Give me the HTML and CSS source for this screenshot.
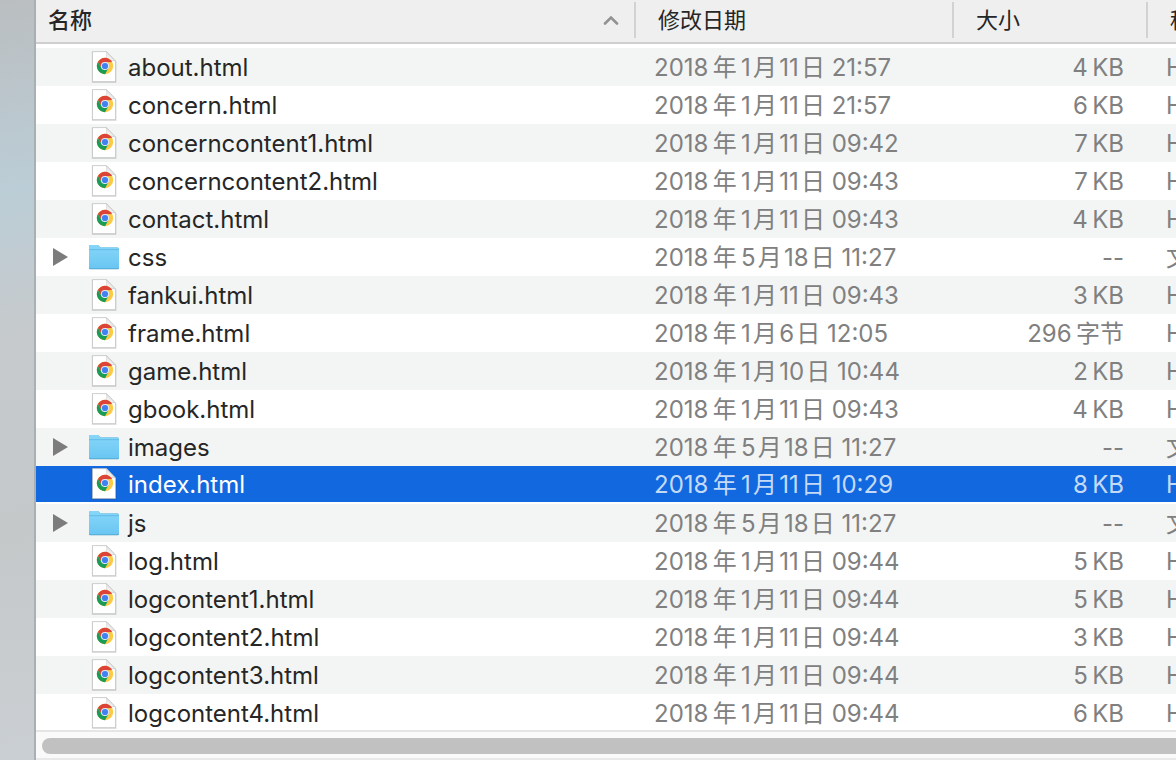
FILE: index.html
```html
<!DOCTYPE html>
<html lang="zh-CN">

<head>
    <meta charset="UTF-8">
    <meta name="viewport" content="width=device-width, initial-scale=1.0">
    <title>文件列表</title>
    <link rel="stylesheet" href="styles.css">
</head>

<body>
    <!-- shared icons -->
    <svg class="sprite" aria-hidden="true">
        <defs>
            <linearGradient id="folderFill" x1="0" y1="0" x2="0" y2="1">
                <stop offset="0" stop-color="#87d6f9" />
                <stop offset="1" stop-color="#69c6f2" />
            </linearGradient>
            <linearGradient id="foldFill" x1="0" y1="1" x2="1" y2="0">
                <stop offset="0" stop-color="#ffffff" />
                <stop offset="1" stop-color="#d4d4d4" />
            </linearGradient>
        </defs>
        <symbol id="page" viewBox="0 0 32 34">
            <path d="M4.5 2.2h14l9.3 9.8v20.200H4.5z" fill="none" stroke="#000" stroke-opacity=".12" stroke-width="1.4" />
            <path d="M4.5 1.6h14l9 9.5v20.5h-23z" fill="#fff" stroke="#bdbdbd" stroke-width=".7" />
            <path d="M18.3 1.8c.8 2.8.5 5.6.1 8.6 3.100-.4 6-.3 9 .7z" fill="url(#foldFill)" stroke="#c4c4c4" stroke-width=".6" />
            <circle cx="17" cy="16" r="8.200" fill="#fbcb43" />
            <path d="M9.900 11.900A8.200 8.200 0 0 1 24.100 11.900L17 12.300 13.540 18z" fill="#db4437" />
            <path d="M9.900 11.900A8.200 8.200 0 0 0 17 24.200L20.500 18 17 19.800 13.540 18z" fill="#1a9c58" />
            <circle cx="17" cy="16" r="4.100" fill="#dfe9fa" />
            <circle cx="17" cy="16" r="3.100" fill="#4082f0" />
        </symbol>
        <symbol id="folder" viewBox="0 0 32 34">
            <path d="M1 28V6.500Q1 5 2.500 5h6.800q1 0 1.600.8l.8 1q.5.700 1.500.700h16.300q1.500 0 1.500 1.500v19q0 1.300-1.300 1.300H2.300Q1 29.300 1 28z" fill="#4a9cc4" />
            <path d="M1 27V6.500Q1 5 2.500 5h6.800q1 0 1.600.8l.8 1q.5.700 1.500.700h16.300q1.500 0 1.500 1.500v18.200q0 1.300-1.300 1.300H2.300Q1 28.500 1 27z" fill="url(#folderFill)" />
            <path d="M1 9.700h30" stroke="#5bb5df" stroke-width=".8" />
        </symbol>
        <symbol id="triangle" viewBox="0 0 16 18">
            <path d="M1 0l15 9-15 9z" fill="currentColor" />
        </symbol>
    </svg>

    <main class="finder">
        <div class="file-list">
            <table>
                <colgroup>
                    <col class="col-name">
                    <col class="col-date">
                    <col class="col-size">
                    <col class="col-kind">
                </colgroup>
                <thead>
                    <tr>
                        <th class="sorted" aria-sort="ascending"><button>名称
                            <svg class="caret" viewBox="0 0 16 10"><path d="M2 8.500l6-6 6 6" fill="none" stroke="currentColor" stroke-width="2.600" stroke-linecap="round" /></svg>
                        </button></th>
                        <th><button>修改日期</button></th>
                        <th><button>大小</button></th>
                        <th><button>种类</button></th>
                    </tr>
                </thead>
                <tbody>
                    <tr>
                        <td><div class="name"><svg class="icon"><use href="#page" /></svg>about.html</div></td>
                        <td>2018&thinsp;年&thinsp;1&hairsp;月&hairsp;11&hairsp;日 21:57</td>
                        <td>4&thinsp;KB</td>
                        <td>HTML</td>
                    </tr>
                    <tr>
                        <td><div class="name"><svg class="icon"><use href="#page" /></svg>concern.html</div></td>
                        <td>2018&thinsp;年&thinsp;1&hairsp;月&hairsp;11&hairsp;日 21:57</td>
                        <td>6&thinsp;KB</td>
                        <td>HTML</td>
                    </tr>
                    <tr>
                        <td><div class="name"><svg class="icon"><use href="#page" /></svg>concerncontent1.html</div></td>
                        <td>2018&thinsp;年&thinsp;1&hairsp;月&hairsp;11&hairsp;日 09:42</td>
                        <td>7&thinsp;KB</td>
                        <td>HTML</td>
                    </tr>
                    <tr>
                        <td><div class="name"><svg class="icon"><use href="#page" /></svg>concerncontent2.html</div></td>
                        <td>2018&thinsp;年&thinsp;1&hairsp;月&hairsp;11&hairsp;日 09:43</td>
                        <td>7&thinsp;KB</td>
                        <td>HTML</td>
                    </tr>
                    <tr>
                        <td><div class="name"><svg class="icon"><use href="#page" /></svg>contact.html</div></td>
                        <td>2018&thinsp;年&thinsp;1&hairsp;月&hairsp;11&hairsp;日 09:43</td>
                        <td>4&thinsp;KB</td>
                        <td>HTML</td>
                    </tr>
                    <tr>
                        <td><div class="name folder"><button class="toggle" aria-label="展开 css"><svg><use href="#triangle" /></svg></button><svg class="icon"><use href="#folder" /></svg>css</div></td>
                        <td>2018&thinsp;年&thinsp;5&hairsp;月&hairsp;18&hairsp;日 11:27</td>
                        <td>--</td>
                        <td>文件夹</td>
                    </tr>
                    <tr>
                        <td><div class="name"><svg class="icon"><use href="#page" /></svg>fankui.html</div></td>
                        <td>2018&thinsp;年&thinsp;1&hairsp;月&hairsp;11&hairsp;日 09:43</td>
                        <td>3&thinsp;KB</td>
                        <td>HTML</td>
                    </tr>
                    <tr>
                        <td><div class="name"><svg class="icon"><use href="#page" /></svg>frame.html</div></td>
                        <td>2018&thinsp;年&thinsp;1&hairsp;月&hairsp;6&hairsp;日 12:05</td>
                        <td>296&thinsp;字节</td>
                        <td>HTML</td>
                    </tr>
                    <tr>
                        <td><div class="name"><svg class="icon"><use href="#page" /></svg>game.html</div></td>
                        <td>2018&thinsp;年&thinsp;1&hairsp;月&hairsp;10&hairsp;日 10:44</td>
                        <td>2&thinsp;KB</td>
                        <td>HTML</td>
                    </tr>
                    <tr>
                        <td><div class="name"><svg class="icon"><use href="#page" /></svg>gbook.html</div></td>
                        <td>2018&thinsp;年&thinsp;1&hairsp;月&hairsp;11&hairsp;日 09:43</td>
                        <td>4&thinsp;KB</td>
                        <td>HTML</td>
                    </tr>
                    <tr>
                        <td><div class="name folder"><button class="toggle" aria-label="展开 images"><svg><use href="#triangle" /></svg></button><svg class="icon"><use href="#folder" /></svg>images</div></td>
                        <td>2018&thinsp;年&thinsp;5&hairsp;月&hairsp;18&hairsp;日 11:27</td>
                        <td>--</td>
                        <td>文件夹</td>
                    </tr>
                    <tr class="selected" aria-selected="true">
                        <td><div class="name"><svg class="icon"><use href="#page" /></svg>index.html</div></td>
                        <td>2018&thinsp;年&thinsp;1&hairsp;月&hairsp;11&hairsp;日 10:29</td>
                        <td>8&thinsp;KB</td>
                        <td>HTML</td>
                    </tr>
                    <tr>
                        <td><div class="name folder"><button class="toggle" aria-label="展开 js"><svg><use href="#triangle" /></svg></button><svg class="icon"><use href="#folder" /></svg>js</div></td>
                        <td>2018&thinsp;年&thinsp;5&hairsp;月&hairsp;18&hairsp;日 11:27</td>
                        <td>--</td>
                        <td>文件夹</td>
                    </tr>
                    <tr>
                        <td><div class="name"><svg class="icon"><use href="#page" /></svg>log.html</div></td>
                        <td>2018&thinsp;年&thinsp;1&hairsp;月&hairsp;11&hairsp;日 09:44</td>
                        <td>5&thinsp;KB</td>
                        <td>HTML</td>
                    </tr>
                    <tr>
                        <td><div class="name"><svg class="icon"><use href="#page" /></svg>logcontent1.html</div></td>
                        <td>2018&thinsp;年&thinsp;1&hairsp;月&hairsp;11&hairsp;日 09:44</td>
                        <td>5&thinsp;KB</td>
                        <td>HTML</td>
                    </tr>
                    <tr>
                        <td><div class="name"><svg class="icon"><use href="#page" /></svg>logcontent2.html</div></td>
                        <td>2018&thinsp;年&thinsp;1&hairsp;月&hairsp;11&hairsp;日 09:44</td>
                        <td>3&thinsp;KB</td>
                        <td>HTML</td>
                    </tr>
                    <tr>
                        <td><div class="name"><svg class="icon"><use href="#page" /></svg>logcontent3.html</div></td>
                        <td>2018&thinsp;年&thinsp;1&hairsp;月&hairsp;11&hairsp;日 09:44</td>
                        <td>5&thinsp;KB</td>
                        <td>HTML</td>
                    </tr>
                    <tr>
                        <td><div class="name"><svg class="icon"><use href="#page" /></svg>logcontent4.html</div></td>
                        <td>2018&thinsp;年&thinsp;1&hairsp;月&hairsp;11&hairsp;日 09:44</td>
                        <td>6&thinsp;KB</td>
                        <td>HTML</td>
                    </tr>
                </tbody>
            </table>
        </div>
        <div class="scrollbar">
            <div class="thumb"></div>
        </div>
    </main>
</body>

</html>
```

FILE: styles.css
```css
* {
    box-sizing: border-box;
    margin: 0;
    padding: 0;
}

body {
    height: 100vh;
    padding-left: 34px;
    overflow: hidden;
    font-family: Inter, "Noto Sans CJK SC", sans-serif;
    background: linear-gradient(170deg, #babec0 0%, #bbcdd6 25%, #c5cacd 42%, #c5c8c9 70%, #cacfd3 100%);
    background-size: 36px 100%;
}

button {
    font: inherit;
    color: inherit;
    background: none;
    border: none;
}

.sprite {
    position: absolute;
    width: 0;
    height: 0;
}

.finder {
    display: flex;
    flex-direction: column;
    height: 100%;
    background: #fff;
    border-left: 2px solid #a9b0b4;
}

.file-list {
    flex: 1;
    min-height: 0;
    overflow: hidden;
}

/* wider than the window, so the kind column runs off the edge */
table {
    width: calc(100% + 160px);
    table-layout: fixed;
    border-collapse: separate;
    border-spacing: 0;
}

.col-date {
    width: 318px;
}

.col-size {
    width: 194px;
}

.col-kind {
    width: 188px;
}

th {
    height: 44px;
    padding: 2px 0 4px;
    background: #efefef;
    border-bottom: 2px solid #cfcfcf;
    font-size: 22px;
    font-weight: 400;
    line-height: 36px;
    color: #262626;
    vertical-align: top;
}

th button {
    display: flex;
    justify-content: space-between;
    align-items: center;
    width: 100%;
    height: 36px;
    padding-left: 22px;
    border-right: 2px solid #d2d2d2;
}

th.sorted button {
    padding: 0 15px 0 12px;
    font-weight: 500;
}

.caret {
    width: 16px;
    height: 10px;
    color: #929292;
}

tbody::before {
    content: "";
    display: block;
    height: 4px;
}

td {
    height: 38px;
    padding: 2px 0 0 18px;
    font-size: 24px;
    line-height: 36px;
    color: #808080;
    white-space: nowrap;
}

tbody tr:nth-child(odd) td {
    background: #f3f5f4;
}

td:first-child {
    padding-left: 52px;
    color: #262626;
}

td:nth-child(3) {
    padding-left: 0;
    padding-right: 24px;
    text-align: right;
}

tbody tr.selected td {
    background: #1268df;
    border-bottom: 2px solid #fff;
    line-height: 34px;
    color: #c5daf7;
}

tbody tr.selected td:first-child {
    color: #fff;
}

.name {
    display: flex;
    align-items: center;
    height: 36px;
}

.selected .name {
    height: 34px;
}

.name.folder {
    margin-left: -36px;
}

.icon {
    width: 32px;
    height: 34px;
    margin: 0 8px 2px 0;
}

.toggle {
    width: 16px;
    height: 18px;
    margin: 0 20px 2px 0;
    color: #7c7c7c;
}

.toggle svg {
    display: block;
    width: 16px;
    height: 18px;
}

.scrollbar {
    height: 30px;
    padding: 6px 0 6px 6px;
    background: #fafafa;
    border-top: 2px solid #e5e5e5;
    border-bottom: 2px solid #e9e9e9;
}

.thumb {
    height: 16px;
    background: #c1c1c1;
    border-radius: 8px 0 0 8px;
}
```
